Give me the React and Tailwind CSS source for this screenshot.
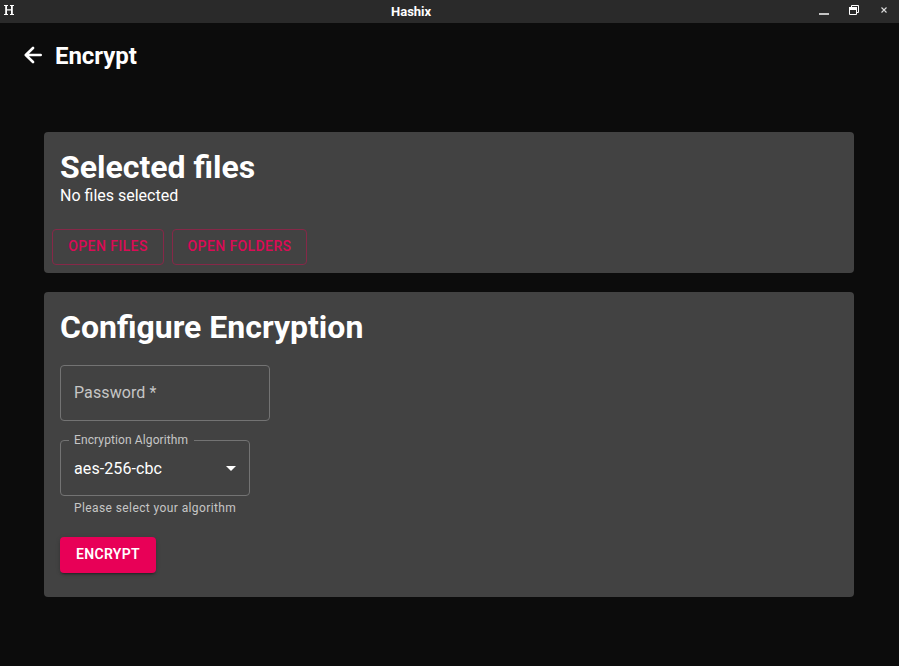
function TitleBar() {
  return (
    <header className="flex h-[23px] items-center bg-[#2a2a2a] text-white">
      <svg className="mb-[3px] ml-1" width="11" height="10" viewBox="0 0 11 10" fill="#fff">
        <path d="M0 0h4v1H0zM6 0h4v1H6zM0 9h4v1H0zM6 9h4v1H6zM1.2 1H3v8H1.2zM7 1h1.8v8H7zM3 4.2h4v1.3H3z" />
      </svg>
      <span className="ml-[376px] w-[42px] text-[13px] leading-[23px] font-bold">Hashix</span>
      <svg className="ml-auto" width="80" height="23" viewBox="0 0 80 23">
        <path d="M0 13h10v2H0z" fill="#c4c4c4" />
        <path d="M32.5 7.5V5.5H39.5V12.5H38" fill="none" stroke="#fff" strokeWidth="1" />
        <path d="M30.5 7.5H37.5V14.5H30.5z" fill="none" stroke="#fff" strokeWidth="1" />
        <path d="M30 7h8v3h-8z" fill="#fff" />
        <path d="M62.5 7.5l5 5M67.5 7.5l-5 5" stroke="#ddd" strokeWidth="1.1" />
      </svg>
    </header>
  );
}

function BackArrow() {
  return (
    <svg
      width="18"
      height="18"
      viewBox="0 0 18 18"
      fill="none"
      stroke="#fff"
      strokeWidth="2.6"
      strokeLinecap="round"
      strokeLinejoin="round"
    >
      <path d="M9 2L1.8 9L9 16M2 9H16.7" />
    </svg>
  );
}

function OutlinedButton({ children, className }) {
  return (
    <button
      className={`h-9 rounded border border-[#862848] pb-0.5 text-[14px] leading-none font-medium tracking-[0.4px] text-[#dc0a55] ${className}`}
    >
      {children}
    </button>
  );
}

export default function App() {
  return (
    <div className="h-[666px] w-[899px] overflow-hidden bg-[#0c0c0c] font-[Roboto,sans-serif] text-white">
      <TitleBar />
      <div className="flex h-16 items-center gap-[13px] pl-6">
        <BackArrow />
        <h1 className="pt-[2px] text-[24px] leading-8 font-bold tracking-[-0.05px]">Encrypt</h1>
      </div>
      <main className="mt-[45px] ml-11 flex w-[810px] flex-col gap-[19px]">
        <section className="h-[141px] rounded bg-[#424242] pt-4">
          <h2 className="pl-4 text-[32px] leading-[38px] font-bold">Selected files</h2>
          <p className="pl-4 text-[16px] leading-[19px]">No files selected</p>
          <div className="mt-6 flex gap-2 pl-2">
            <OutlinedButton className="w-28">OPEN FILES</OutlinedButton>
            <OutlinedButton className="w-[135px]">OPEN FOLDERS</OutlinedButton>
          </div>
        </section>
        <section className="flex h-[305px] flex-col items-start rounded bg-[#424242] px-4 pt-4">
          <h2 className="text-[32px] leading-[38px] font-bold">Configure Encryption</h2>
          <div className="mt-[19px] flex h-14 w-[210px] items-center rounded border border-[#737373] px-[13px] text-[16px] tracking-[0.1px] text-[#c6c6c6]">
            Password *
          </div>
          <fieldset className="mt-[13px] h-[62px] w-[190px] rounded border border-[#737373] pl-2">
            <legend className="h-[13px] w-[125px] px-[5px] text-[12px] leading-[13px] tracking-[0.11px] whitespace-nowrap text-[#c6c6c6]">
              Encryption Algorithm
            </legend>
            <div className="flex h-[43px] items-center justify-between pr-[13px] pl-[5px] text-[16px] tracking-[0.1px]">
              aes-256-cbc
              <svg width="10" height="5" viewBox="0 0 10 5" fill="#fff">
                <path d="M0 0l5 5 5-5z" />
              </svg>
            </div>
          </fieldset>
          <p className="mt-[2px] pl-[14px] text-[12px] leading-5 tracking-[0.4px] text-[#c6c6c6]">
            Please select your algorithm
          </p>
          <button className="mt-[19px] h-9 w-24 rounded bg-[#e80057] pb-0.5 text-[14px] leading-none font-semibold tracking-[0.35px] shadow-[0_3px_1px_-2px_rgba(0,0,0,0.2),0_2px_2px_0_rgba(0,0,0,0.14),0_1px_5px_0_rgba(0,0,0,0.12)]">
            ENCRYPT
          </button>
        </section>
      </main>
    </div>
  );
}
